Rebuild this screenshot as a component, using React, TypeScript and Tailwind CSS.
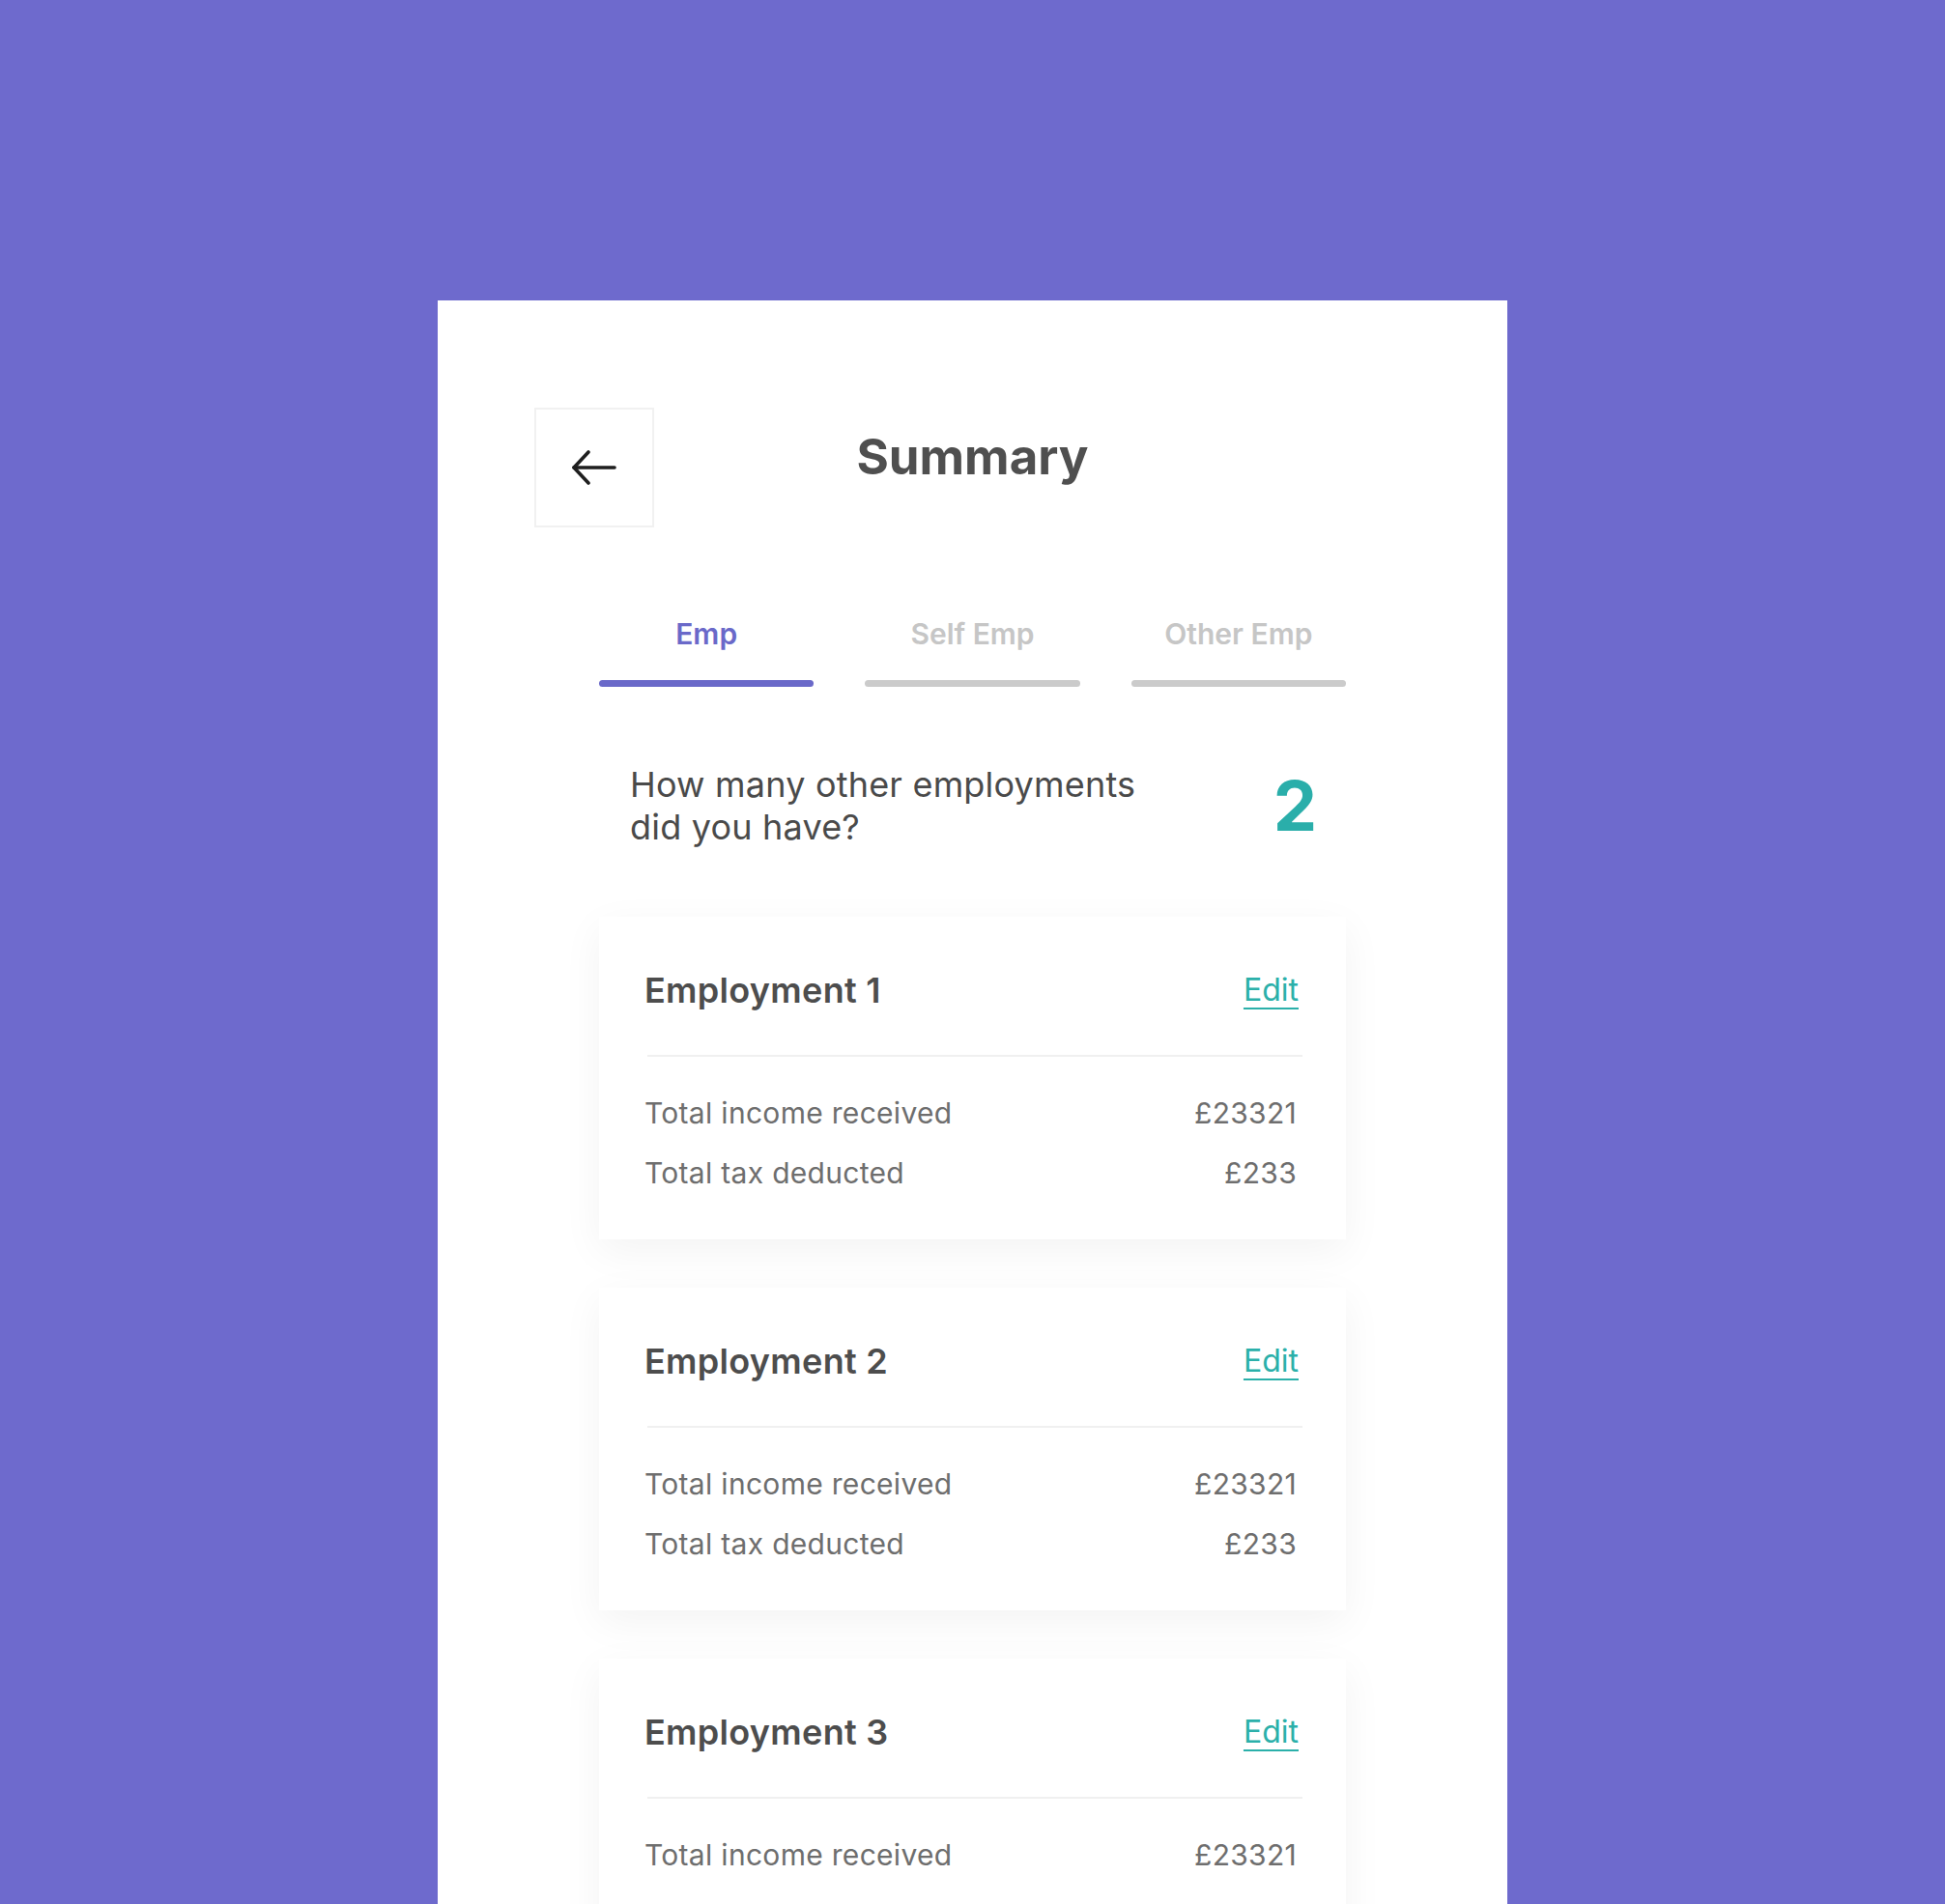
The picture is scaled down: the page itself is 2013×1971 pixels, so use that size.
import React from 'react';

type Employment = {
  title: string;
  income: string;
  tax: string;
};

const employments: Employment[] = [
  { title: 'Employment 1', income: '£23321', tax: '£233' },
  { title: 'Employment 2', income: '£23321', tax: '£233' },
  { title: 'Employment 3', income: '£23321', tax: '£233' },
];

const tabs = ['Emp', 'Self Emp', 'Other Emp'];

const BackButton = () => (
  <button className="w-[124px] h-[124px] border-2 border-[#f1f1f1] bg-white flex items-center justify-center">
    <svg width="48" height="36" viewBox="0 0 48 36" fill="none" stroke="#1f1f1f" strokeWidth={3.6} strokeLinecap="round" strokeLinejoin="round">
      <path d="M3 18h42" />
      <path d="M18 2L3 18l15 16" />
    </svg>
  </button>
);

const EmploymentCard = ({ title, income, tax }: Employment) => (
  <div className="bg-white shadow-[0_12px_40px_rgba(0,0,0,0.05)] pt-[52px] pb-[49px] pl-[47px] pr-[49px]">
    <div className="flex items-center justify-between">
      <h3 className="text-[36px] leading-[48px] font-semibold tracking-[0.3px] text-[#4d4d4d]">{title}</h3>
      <a href="#" className="text-[32px] leading-[40px] text-[#2bb0aa] underline underline-offset-[7px] decoration-2">
        Edit
      </a>
    </div>
    <div className="h-[2px] bg-[#f0f0f0] mt-[43px] ml-[3px] -mr-[4px]" />
    <div className="mt-[38px] flex flex-col gap-[22px] text-[30px] leading-[40px] tracking-[0.3px] text-[#6e6e6e] pr-[2px]">
      <div className="flex justify-between">
        <span>Total income received</span>
        <span>{income}</span>
      </div>
      <div className="flex justify-between">
        <span>Total tax deducted</span>
        <span>{tax}</span>
      </div>
    </div>
  </div>
);

export default function App() {
  return (
    <div
      className="h-[1971px] overflow-hidden bg-[#6e6acd] pt-[311px]"
      style={{ fontFamily: 'Inter, "Noto Sans", sans-serif' }}
    >
      <div className="w-[1107px] mx-auto bg-white min-h-[1660px] px-[100px] pt-[111px] pb-[80px]">
        {/* Header */}
        <div className="grid grid-cols-[124px_1fr_124px] items-start">
          <BackButton />
          <h1 className="text-center mt-[21px] text-[51px] leading-[60px] font-bold text-[#4f4f4f]">Summary</h1>
          <div />
        </div>

        <div className="mx-[67px]">
          {/* Tabs */}
          <div className="mt-[90px] grid grid-cols-3 gap-[53px]">
            {tabs.map((tab, i) => (
              <div key={tab} className="flex flex-col items-center">
                <span
                  className={
                    i === 0
                      ? 'text-[30px] leading-[40px] font-semibold text-[#6a69c9]'
                      : 'text-[30px] leading-[40px] font-semibold text-[#c6c6c6]'
                  }
                >
                  {tab}
                </span>
                <div
                  className={
                    i === 0
                      ? 'mt-[28px] h-[7px] w-full rounded-full bg-[#6a69c9]'
                      : 'mt-[28px] h-[7px] w-full rounded-full bg-[#cbcbcb]'
                  }
                />
              </div>
            ))}
          </div>

          {/* Question */}
          <div className="mt-[79px] flex items-center justify-between pl-[32px] pr-[30px]">
            <p className="text-[36px] leading-[44px] text-[#4a4a4a] tracking-[0.2px]">
              How many other employments
              <br />
              did you have?
            </p>
            <span className="text-[72px] leading-[80px] font-bold text-[#2aaeaa]">2</span>
          </div>

          {/* Employment cards */}
          <div className="mt-[71px] flex flex-col gap-[50px]">
            {employments.map((emp) => (
              <EmploymentCard key={emp.title} {...emp} />
            ))}
          </div>
        </div>
      </div>
    </div>
  );
}
